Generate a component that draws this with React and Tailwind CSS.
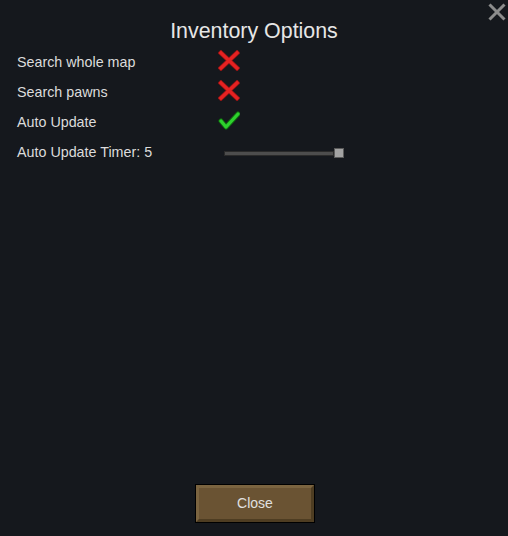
import React from "react";

function XIcon() {
  return (
    <svg width="22" height="21" viewBox="0 0 22 21">
      <g strokeLinecap="square">
        <line x1="3" y1="3" x2="19" y2="18" stroke="#8a1414" strokeWidth="5" />
        <line x1="19" y1="3" x2="3" y2="18" stroke="#8a1414" strokeWidth="5" />
        <line x1="3" y1="3" x2="19" y2="18" stroke="#e62222" strokeWidth="3.4" />
        <line x1="19" y1="3" x2="3" y2="18" stroke="#e62222" strokeWidth="3.4" />
      </g>
    </svg>
  );
}

function CheckIcon() {
  return (
    <svg width="22" height="20" viewBox="0 0 22 20">
      <polyline points="3,10 8,16 20,3" fill="none" stroke="#0f6a0f" strokeWidth="5" strokeLinecap="round" strokeLinejoin="round" />
      <polyline points="3,10 8,16 20,3" fill="none" stroke="#2ed12e" strokeWidth="3.2" strokeLinecap="round" strokeLinejoin="round" />
    </svg>
  );
}

function Row({ label, children }) {
  return (
    <div className="flex h-[30px] items-center">
      <div className="w-[201px] text-[14.3px] text-[#dcdcdc]">{label}</div>
      {children}
    </div>
  );
}

export default function App() {
  return (
    <div className="relative flex h-[536px] w-[508px] flex-col bg-[#15181d] font-['Liberation_Sans',Arial,sans-serif]">
      <svg className="absolute right-[2px] top-[3px]" width="18" height="18" viewBox="0 0 18 18">
        <line x1="1.5" y1="1.5" x2="16.5" y2="16.5" stroke="#8c8c8c" strokeWidth="3" />
        <line x1="16.5" y1="1.5" x2="1.5" y2="16.5" stroke="#8c8c8c" strokeWidth="3" />
      </svg>
      <div className="pt-[18px] text-center text-[21.4px] leading-[26px] text-[#e6e6e6]">Inventory Options</div>
      <div className="mt-[4px] flex flex-col pl-[17px]">
        <Row label="Search whole map">
          <div className="pb-[5px]">
            <XIcon />
          </div>
        </Row>
        <Row label="Search pawns">
          <div className="pb-[5px]">
            <XIcon />
          </div>
        </Row>
        <Row label="Auto Update">
          <div className="pb-[5px]">
            <CheckIcon />
          </div>
        </Row>
        <Row label="Auto Update Timer: 5">
          <div className="ml-[6px] flex items-center">
            <div className="h-[5px] w-[110px] border border-[#2a2a2a] bg-[#4d4d4d]" />
            <div className="h-[10px] w-[10px] border border-[#5a5a5a] bg-[#a3a3a3]" />
          </div>
        </Row>
      </div>
      <div className="flex-1" />
      <div className="mb-[13px] flex justify-center">
        <div className="ml-[2px] border border-black">
          <div className="flex h-[37px] w-[118px] items-center justify-center border-[3px] border-b-[#4e3d22] border-l-[#7b6440] border-r-[#4e3d22] border-t-[#7b6440] bg-[#6a5333] text-[14px] text-[#e0e0e0]">
            Close
          </div>
        </div>
      </div>
    </div>
  );
}
